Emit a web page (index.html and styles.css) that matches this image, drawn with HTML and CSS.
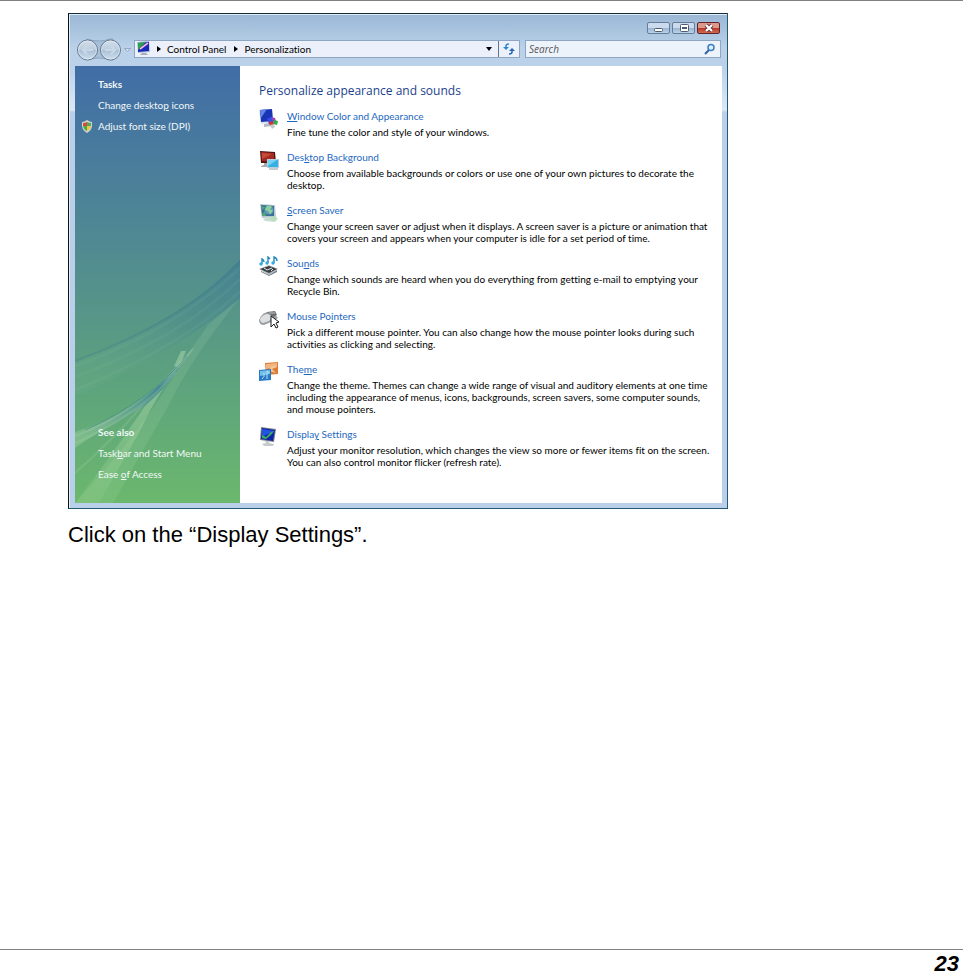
FILE: index.html
```html
<!DOCTYPE html>
<html lang="en">
<head>
<meta charset="utf-8">
<title>Personalization</title>
<link rel="stylesheet" href="styles.css">
</head>
<body>
<main class="page">
  <section class="window" aria-label="Personalization">
    <div class="titlebar">
      <button class="winbtn" aria-label="Minimize"><svg width="22" height="11" viewBox="0 0 22 11"><rect x="6.500" y="5.500" width="8" height="3" rx="1" fill="#fff" stroke="#4d5b70"/></svg></button>
      <button class="winbtn" aria-label="Maximize"><svg width="22" height="11" viewBox="0 0 22 11"><rect x="7.500" y="1.500" width="8" height="7" rx="1" fill="#fff" stroke="#4d5b70"/><rect x="9.500" y="4.500" width="4" height="1" fill="#9bb" stroke="#4d5b70"/></svg></button>
      <button class="winbtn close" aria-label="Close"><svg width="22" height="11" viewBox="0 0 22 11"><path d="M8 2l6 6M14 2L8 8" stroke="#693039" stroke-width="4"/><path d="M8 2l6 6M14 2L8 8" stroke="#fff" stroke-width="2.200"/></svg></button>
    </div>
    <div class="toolbar">
      <div class="history">
        <svg width="56" height="24" viewBox="0 0 56 24">
          <defs><linearGradient id="orb" x2="0" y2="1"><stop stop-color="#d3dfec"/><stop offset=".48" stop-color="#bccddd"/><stop offset=".52" stop-color="#a9bfd4"/><stop offset="1" stop-color="#cfe1f1"/></linearGradient></defs>
          <path d="M11 1q12 4 23 0h3v21h-3q-11-4-23 0z" fill="#a7bfd8" stroke="#8ca5c0"/>
          <circle cx="11.500" cy="12" r="10" fill="url(#orb)" stroke="#66788d"/><circle cx="11.500" cy="12" r="9" fill="none" stroke="#e0ebf5" opacity=".7"/>
          <circle cx="34.500" cy="12" r="10" fill="url(#orb)" stroke="#66788d"/><circle cx="34.500" cy="12" r="9" fill="none" stroke="#e0ebf5" opacity=".7"/>
          <path d="M17 12H7m4-4l-4 4 4 4M29 12h10m-4-4l4 4-4 4" fill="none" stroke="#c8d8e8" stroke-width="2"/>
          <path d="M48.500 10.500h6l-3 3z" fill="#d5e4f3" stroke="#91a9c5"/>
        </svg>
      </div>
      <nav class="address" aria-label="Address">
        <svg width="15" height="16" viewBox="0 0 15 16"><path d="M1 1l12-1 1 11-12 1z" fill="#aebdd0"/><path d="M2 2l11-1v9L2 11z" fill="#1729b8"/><path d="M2 2l8-1-8 8z" fill="#25a34b"/><path d="M4 8l8-6" stroke="#e17ad0" stroke-width="2"/><path d="M4 8l8-6" stroke="#fff" stroke-width=".7"/><path d="M6 12h4l2 2H4z" fill="#a6adb4"/></svg>
        <svg width="4" height="6" viewBox="0 0 4 6"><path d="M0 0l4 3-4 3z"/></svg>
        <a href="#">Control Panel</a>
        <svg width="4" height="6" viewBox="0 0 4 6"><path d="M0 0l4 3-4 3z"/></svg>
        <a href="#">Personalization</a>
        <button class="drop" aria-label="Previous locations"><svg width="6" height="4" viewBox="0 0 6 4"><path d="M0 0h6L3 4z"/></svg></button>
        <button class="refresh" aria-label="Refresh"><svg width="14" height="14" viewBox="0 0 14 14"><path d="M1 5h6L4 8z" fill="#2f86d3"/><path d="M4 6V4q0-2 3-2" fill="none" stroke="#2f86d3" stroke-width="1.500"/><path d="M7 9h6l-3-3z" fill="#2465b3"/><path d="M10 8v2q0 2-3 2" fill="none" stroke="#2465b3" stroke-width="1.500"/></svg></button>
      </nav>
      <div class="search">
        <input type="search" placeholder="Search" aria-label="Search">
        <svg width="12" height="12" viewBox="0 0 12 12"><path d="M1 11l4-4" stroke="#315f9f" stroke-width="2"/><circle cx="7" cy="4.500" r="3" fill="#dff1ff" stroke="#3d7cbd" stroke-width="1.500"/></svg>
      </div>
    </div>
    <div class="content">
      <aside class="sidebar">
        <svg class="aurora" viewBox="0 0 165 437" preserveAspectRatio="none" aria-hidden="true">
          <defs><linearGradient id="wave" x1="0" y1="1" x2="1" y2="0"><stop stop-color="#9bd29a" stop-opacity=".05"/><stop offset=".6" stop-color="#377a91" stop-opacity=".2"/><stop offset="1" stop-color="#347795" stop-opacity=".45"/></linearGradient><linearGradient id="tip" x1="0" y1="1" x2="1" y2="0"><stop stop-color="#b9e2b0" stop-opacity=".3"/><stop offset=".65" stop-color="#377f91" stop-opacity=".75"/><stop offset="1" stop-color="#8fc4a0" stop-opacity=".6"/></linearGradient><linearGradient id="ray" x2="0" y2="1"><stop stop-color="#c7e9bc" stop-opacity=".5"/><stop offset="1" stop-color="#b6e1a7" stop-opacity=".1"/></linearGradient></defs>
          <path d="M0 294Q110 254 165 194v39Q90 292 0 330z" fill="url(#wave)"/>
          <path d="M0 300Q100 264 165 202M0 311Q105 272 165 213M0 324Q112 278 165 225" fill="none" stroke="#a9d2b5" stroke-opacity=".08" stroke-width="3"/>
          <path d="M0 295Q109 255 165 195" fill="none" stroke="#39778b" stroke-opacity=".3" stroke-width="2"/>
          <path d="M165 232Q119 288 92 342L38 437H0Q70 362 110 292l24-34z" fill="#bfe5b9" fill-opacity=".13"/>
          <path d="M99 300l7-15h5l-7 17z" fill="#b8dfb4" fill-opacity=".45"/>
          <path d="M118 282Q84 323 66 363L24 437H0Q38 388 70 340l22-28z" fill="url(#ray)"/>
          <path d="M0 366Q69 345 119 281Q94 320 70 340Q27 363 0 382z" fill="url(#tip)"/>
          <path d="M0 370Q66 346 118 283M0 377Q65 349 101 306M0 407Q42 370 73 333" fill="none" stroke="#d2edc4" stroke-opacity=".14" stroke-width="2"/>
          <path d="M10 364Q72 337 112 290" fill="none" stroke="#347b83" stroke-opacity=".45"/>
        </svg>
        <div class="links">
          <h2>Tasks</h2>
          <a href="#">Change deskto<u>p</u> icons</a>
          <a class="shielded" href="#"><svg width="12" height="13" viewBox="0 0 12 13"><path d="M6 0q3 2 5 2 1 8-5 11Q0 10 1 2q2 0 5-2z" fill="#cfd5cc"/><path d="M6 2v4H2V3q2 0 4-1z" fill="#d64b3b"/><path d="M6 2q2 1 4 1v3H6z" fill="#51a858"/><path d="M2 6h4v5Q3 10 2 6z" fill="#4caa4c"/><path d="M6 6h4q-1 4-4 5z" fill="#f3c642"/></svg>Adjust font size (DPI)</a>
        </div>
        <div class="links">
          <h2>See also</h2>
          <a href="#">Task<u>b</u>ar and Start Menu</a>
          <a href="#">Ease <u>o</u>f Access</a>
        </div>
      </aside>
      <div class="panel">
        <h1>Personalize appearance and sounds</h1>
        <ul class="items">
          <li>
            <svg class="icon" viewBox="0 0 20 20"><path d="M0 1l13-1 2 13L2 15z" fill="#d9e0ea"/><path d="M1 1l12-1 1 12L2 13z" fill="#1735b5"/><path d="M1 1l7-1-6 9z" fill="#6384e6"/><path d="M5 15l5-1 3 3-8 1z" fill="#b7bbc1"/><path d="M8 10l4-2 3 3-1 5-4-1z" fill="#334eed"/><path d="M12 8l4 1 1 3-3 1z" fill="#9c43b9"/><path d="M15 11l4 1-1 4-4-1z" fill="#37a949"/><path d="M10 12l4 1 1 3-4 1z" fill="#d83231"/><path d="M11 16l4-1 1 3-3 2z" fill="#c5cad0"/></svg>
            <div><a href="#"><u>W</u>indow Color and Appearance</a><p>Fine tune the color and style of your windows.</p></div>
          </li>
          <li>
            <svg class="icon" viewBox="0 0 20 20"><path d="M1 1l15 1 1 11L2 13z" fill="#4b1713"/><path d="M2 2l13 1v9L3 11z" fill="#a32b22"/><path d="M3 3l10 1-10 5z" fill="#c94a37"/><path d="M5 13h4v3h3v1H2v-1l3-1z" fill="#a8aaac"/><rect x="8.500" y="9.500" width="11" height="8" fill="#36afe2" stroke="#b7cedd"/><path d="M9 10h9l-9 6z" fill="#75d2f4"/><path d="M10 19h9" stroke="#91989e"/></svg>
            <div><a href="#">Des<u>k</u>top Background</a><p>Choose from available backgrounds or colors or use one of your own pictures to decorate the desktop.</p></div>
          </li>
          <li>
            <svg class="icon" viewBox="0 0 20 20"><path d="M1 1l15 1 1 12-14 1z" fill="#b8c7d0"/><path d="M2 2l13 1v10H3z" fill="#3c6f96"/><path d="M2 3l4 1-2 3zm1 8l3-3 1 5H3z" fill="#53a777"/><circle cx="10" cy="7" r="4.500" fill="#5e9bbb"/><path d="M7 4q3-3 6 0l-2 2 3 2-3 3-2-3-3-1z" fill="#8ed09b"/><path d="M8 14h4l6 3-2 2-10-1-2-2z" fill="#c6dfd4"/><path d="M10 15l6-2 3 3-5 2z" fill="#b8ddb7"/></svg>
            <div><a href="#"><u>S</u>creen Saver</a><p>Change your screen saver or adjust when it displays. A screen saver is a picture or animation that covers your screen and appears when your computer is idle for a set period of time.</p></div>
          </li>
          <li>
            <svg class="icon" viewBox="0 0 20 20"><path d="M0 13l10-4 9 4-9 6z" fill="#b1b8bd"/><path d="M1 13l9-3 8 3-8 4z" fill="#3a3f43"/><path d="M2 15l8 4 8-5v2l-8 4-8-4z" fill="#777f85"/><path d="M5 12l3 2 5-2m-1 3l2-2" stroke="#e4e8e9" fill="none"/><path d="M3 8V3q2 1 2 3M9 7V1l2 2M15 7V1q3 1 3 4" fill="none" stroke="#2188be" stroke-width="1.400"/><circle cx="2" cy="8" r="1.700" fill="#35ace1"/><circle cx="8" cy="7" r="1.700" fill="#35ace1"/><circle cx="14" cy="7" r="1.700" fill="#35ace1"/></svg>
            <div><a href="#">Sou<u>n</u>ds</a><p>Change which sounds are heard when you do everything from getting e-mail to emptying your Recycle Bin.</p></div>
          </li>
          <li>
            <svg class="icon" viewBox="0 0 20 20"><path d="M0 11Q2 5 8 3l7 1 4 5-7 4-7 3q-5 0-5-5z" fill="#9b9fa2"/><path d="M1 10Q4 5 9 5l5 3-4 4-6 2q-3-1-3-4z" fill="#dddfe0"/><path d="M8 3l8-1 2 4-4 2z" fill="#6b6f73"/><path d="M10 4l6 0" stroke="#c3c6c8"/><path d="M12 7v11l3-3 2 4 2-1-2-4 3-1z" fill="#fff" stroke="#17191b"/></svg>
            <div><a href="#">Mouse Po<u>i</u>nters</a><p>Pick a different mouse pointer. You can also change how the mouse pointer looks during such activities as clicking and selecting.</p></div>
          </li>
          <li>
            <svg class="icon" viewBox="0 0 20 20"><path d="M6 1l13-1v12L7 13z" fill="#dd7d35"/><path d="M7 2l11-1v4L7 7z" fill="#f1b582"/><path d="M10 9q2-7 8-4l-5 2 4 4z" fill="#f8c499"/><path d="M0 8l12-1v11l-12 1z" fill="#2879c6"/><path d="M1 9l10-1v4L1 14z" fill="#72bfe9"/><path d="M3 17q3-2 2-6m3 6V9l2 2" fill="none" stroke="#b4e3fa"/></svg>
            <div><a href="#">The<u>m</u>e</a><p>Change the theme. Themes can change a wide range of visual and auditory elements at one time including the appearance of menus, icons, backgrounds, screen savers, some computer sounds, and mouse pointers.</p></div>
          </li>
          <li>
            <svg class="icon" viewBox="0 0 20 20"><path d="M2 0l15 2-2 13-14-2z" fill="#78818c"/><path d="M3 1l13 2-2 11-12-2z" fill="#1023a6"/><path d="M3 2l12 2-2 3Q8 6 3 11z" fill="#2255df"/><path d="M3 8l4 2 5-5 3-1-3 4-5 4-4-1z" fill="#39ae62"/><path d="M6 14h5l-1 2 5 1-1 2H5l-2-2 4-1z" fill="#c8cbcc"/></svg>
            <div><a href="#">Displa<u>y</u> Settings</a><p>Adjust your monitor resolution, which changes the view so more or fewer items fit on the screen. You can also control monitor flicker (refresh rate).</p></div>
          </li>
        </ul>
      </div>
    </div>
  </section>
  <p class="caption">Click on the “Display Settings”.</p>
</main>
<footer class="footer">23</footer>
</body>
</html>
```
FILE: styles.css
```css
* { box-sizing: border-box; }
body {
  margin: 0;
  min-height: 100vh;
  display: flex;
  flex-direction: column;
  background: #fff;
  color: #000;
  border-top: 1px solid #808080;
  font-family: "Liberation Sans", sans-serif;
}
h1, h2, p, ul { margin: 0; padding: 0; }
a { color: inherit; text-decoration: none; }
svg { display: block; flex: none; }
button { padding: 0; border: 0; background: none; font: inherit; }
.page { flex: 1; padding: 12px 0 0 68px; }
.window {
  max-width: 660px;
  padding: 0 5px 5px 6px;
  border: 1px solid #235a73;
  border-top-color: #182b35;
  border-left-color: #0b1216;
  background: linear-gradient(#9ab7d5 0, #bad1e9 34px, #bad1e9 52px, #dce7f7 96px, #b9cfea 98px);
  box-shadow: inset 1px 1px #e1eefa;
  font: 10px/12px Lato, "Open Sans", sans-serif;
  font-variant-ligatures: none;
}
.titlebar {
  height: 24px;
  padding: 8px 2px 0 0;
  display: flex;
  justify-content: flex-end;
  align-items: flex-start;
  gap: 2px;
}
.winbtn {
  width: 23px;
  height: 12px;
  overflow: hidden;
  border: 1px solid #637d9b;
  border-radius: 2px;
  background: linear-gradient(#cbdbed 45%, #9ab3cf 50%, #bad3ea);
}
.close { border-color: #63232c; background: linear-gradient(#dc9888 45%, #b73423 50%, #d36c50); }
.toolbar { height: 28px; display: flex; align-items: flex-start; gap: 5px; padding-right: 1px; }
.history { width: 54px; padding-left: 1px; }
.address {
  flex: 1;
  height: 18px;
  margin-top: 2px;
  display: flex;
  align-items: center;
  gap: 6px;
  padding-left: 1px;
  border: 1px solid #8ea6c3;
  background: #ebf0fa;
}
.address a + svg { margin-left: 2px; }
.drop { margin-left: auto; }
.refresh { height: 16px; width: 21px; padding-left: 3px; border-left: 1px solid #60748c; }
.search {
  width: 196px;
  height: 18px;
  margin-top: 2px;
  display: flex;
  align-items: center;
  padding: 0 4px 0 3px;
  border: 1px solid #8ea6c3;
  background: #edf3fb;
}
.search input {
  flex: 1;
  min-width: 0;
  padding: 0;
  border: 0;
  outline: 0;
  background: none;
  font: italic 10px/14px "Open Sans", sans-serif;
}
.search input::placeholder { color: #555; opacity: 1; }
.content { display: flex; min-height: 437px; background: #fff; }
.sidebar {
  position: relative;
  width: 165px;
  flex: none;
  display: flex;
  flex-direction: column;
  justify-content: space-between;
  padding: 8px 0 18px 23px;
  color: #f2f8f8;
  background: linear-gradient(#416da6, #487b9d 20%, #538e8e 47%, #5da37d 73%, #6bb86d);
}
.aurora { position: absolute; inset: 0; width: 100%; height: 100%; }
.links { position: relative; line-height: 21px; }
.links h2 { font-size: 10px; line-height: 21px; font-weight: 700; }
.links a { display: block; }
.links .shielded { display: flex; align-items: center; gap: 5px; margin-left: -17px; }
.panel { flex: 1; padding: 16px 10px 20px 19px; }
.panel h1 { font: 400 12px/18px "Open Sans", sans-serif; color: #1b3f8b; }
.items { list-style: none; margin-top: 8px; display: grid; gap: 11px; }
.items li { display: flex; gap: 8px; }
.icon { width: 20px; height: 20px; margin-top: 1px; }
.items a { display: block; line-height: 16px; color: #1e68c0; }
.items p { margin-top: 2px; line-height: 12px; }
.caption { margin-top: 12px; font-size: 22px; line-height: 28px; }
.footer {
  height: 24px;
  padding: 5px 4px 0 0;
  border-top: 1px solid #808080;
  text-align: right;
  font-size: 22px;
  line-height: 18px;
  font-weight: 700;
  font-style: italic;
}
```
